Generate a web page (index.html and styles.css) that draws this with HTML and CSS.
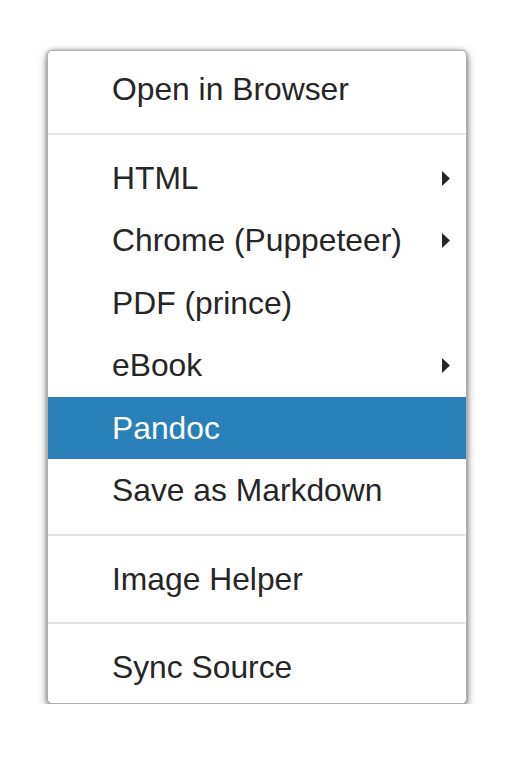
FILE: index.html
```html
<!DOCTYPE html>
<html>
<head>
<meta charset="utf-8">
<link rel="stylesheet" href="styles.css">
</head>
<body>
<div class="menu">
  <div class="item">Open in Browser</div>
  <div class="sep"></div>
  <div class="item">HTML<svg class="arrow" width="8" height="15" viewBox="0 0 8 15"><polygon points="0,0 8,7.5 0,15"/></svg></div>
  <div class="item">Chrome (Puppeteer)<svg class="arrow" width="8" height="15" viewBox="0 0 8 15"><polygon points="0,0 8,7.5 0,15"/></svg></div>
  <div class="item">PDF (prince)</div>
  <div class="item">eBook<svg class="arrow" width="8" height="15" viewBox="0 0 8 15"><polygon points="0,0 8,7.5 0,15"/></svg></div>
  <div class="item active">Pandoc</div>
  <div class="item">Save as Markdown</div>
  <div class="sep"></div>
  <div class="item">Image Helper</div>
  <div class="sep"></div>
  <div class="item">Sync Source</div>
</div>
</body>
</html>
```
FILE: styles.css
```css
html, body {
  margin: 0;
  padding: 0;
  background: #ffffff;
}
body {
  padding: 50px 0 0 47px;
  font-family: "Liberation Sans", Arial, sans-serif;
}
.menu {
  width: 418px;
  background: #ffffff;
  border: 1px solid #b0b0b0;
  border-radius: 5px;
  padding: 7px 0 4px;
  box-shadow: 0 4px 8px rgba(0, 0, 0, 0.5), 0 0 4px rgba(0, 0, 0, 0.3);
}
.item {
  height: 62.5px;
  display: flex;
  align-items: center;
  justify-content: space-between;
  padding: 1px 16px 0 64px;
  box-sizing: border-box;
  font-size: 31.8px;
  color: #262626;
}
.item.active {
  background: #2980b9;
  color: #ffffff;
}
.arrow {
  fill: #262626;
  display: block;
}
.sep {
  height: 2px;
  background: #e4e4e4;
  margin: 12px 0;
}
```
